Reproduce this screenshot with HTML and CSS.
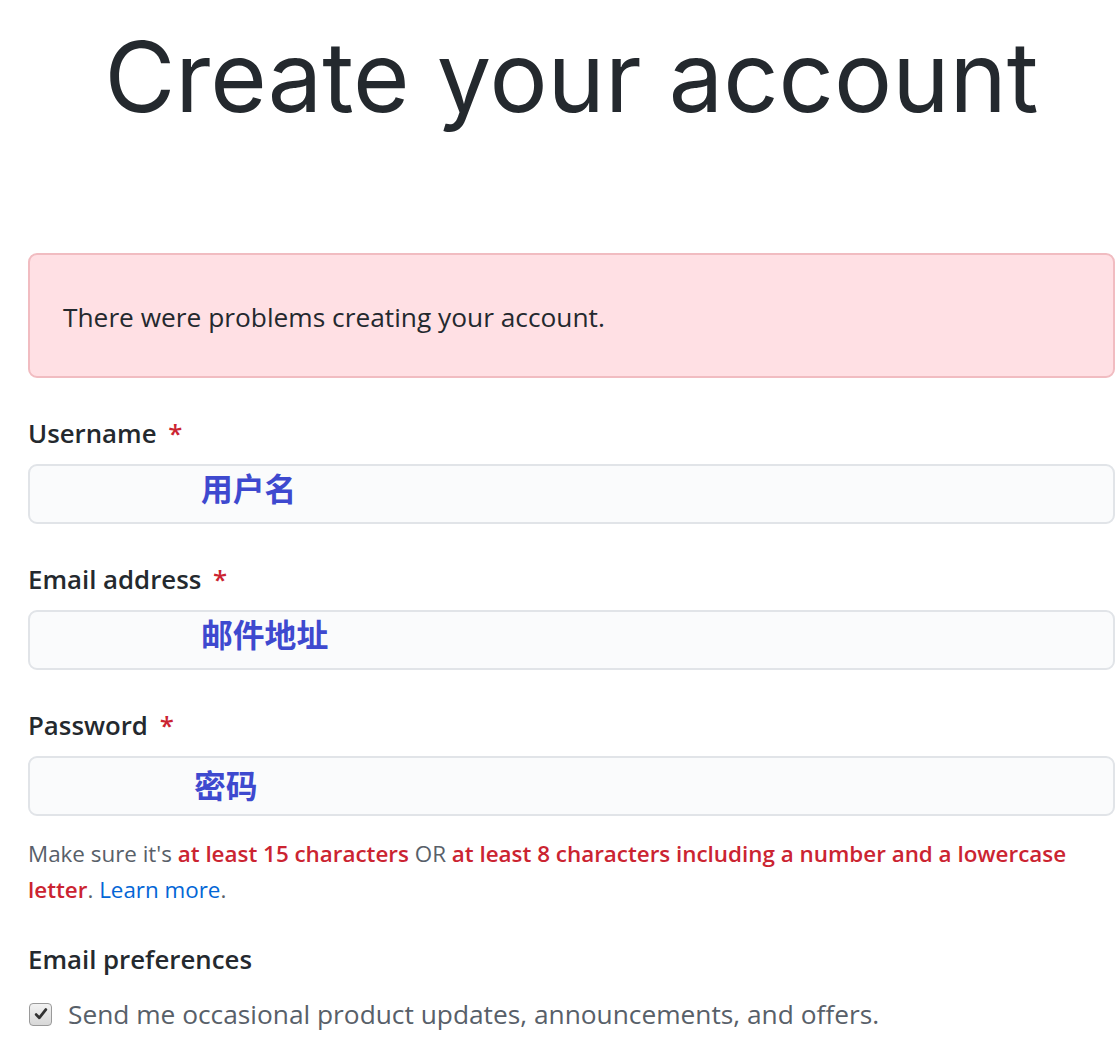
FILE: index.html
```html
<!DOCTYPE html>
<html lang="en">
<head>
<meta charset="utf-8">
<title>Create your account</title>
<link rel="stylesheet" href="styles.css">
</head>
<body>
<main class="page">
  <h1 class="title">Create your account</h1>
  <div class="flash-error">There were problems creating your account.</div>
  <form class="form">
    <div class="field">
      <label class="label">Username <span class="req">*</span></label>
      <div class="input"><span class="hint hint-user">用户名</span></div>
    </div>
    <div class="field">
      <label class="label">Email address <span class="req">*</span></label>
      <div class="input"><span class="hint hint-email">邮件地址</span></div>
    </div>
    <div class="field">
      <label class="label">Password <span class="req">*</span></label>
      <div class="input"><span class="hint hint-pass">密码</span></div>
      <p class="note">Make sure it's <strong class="err">at least 15 characters</strong> OR <strong class="err">at least 8 characters including a number and a lowercase letter</strong>. <a class="link" href="#">Learn more</a>.</p>
    </div>
    <div class="prefs">
      <h2 class="prefs-title">Email preferences</h2>
      <label class="check">
        <span class="box"><svg viewBox="0 0 16 16" width="16" height="16"><path d="M3.2 8.6 L6.3 11.8 L12.8 3.6" fill="none" stroke="#333" stroke-width="2.8" stroke-linecap="round" stroke-linejoin="round"/></svg></span>
        <span class="check-text">Send me occasional product updates, announcements, and offers.</span>
      </label>
    </div>
  </form>
</main>
</body>
</html>
```

FILE: styles.css
```css
html, body {
  margin: 0;
  padding: 0;
  background: #ffffff;
}

body {
  font-family: "Open Sans", "Noto Sans", "Liberation Sans", sans-serif;
  color: #24292e;
  overflow: hidden;
}

.page {
  width: 1087px;
  padding-left: 28px;
}

.title {
  margin: 0;
  padding-top: 19px;
  font-family: Inter, "Liberation Sans", sans-serif;
  font-weight: 400;
  font-size: 97px;
  line-height: 116px;
  text-align: center;
  color: #24292e;
  height: 234px;
}

.flash-error {
  box-sizing: border-box;
  height: 125px;
  display: flex;
  align-items: center;
  padding: 2px 33px 0;
  background: #ffe0e4;
  border: 2px solid #f1bcc1;
  border-radius: 9px;
  font-size: 26.3px;
  color: #24292e;
}

.form {
  display: flex;
  flex-direction: column;
}

.field {
  display: flex;
  flex-direction: column;
  margin-top: 40px;
}

.field + .field {
  margin-top: 40px;
}

.label {
  font-size: 25.8px;
  font-weight: 600;
  line-height: 30px;
  margin-bottom: 16px;
}

.req {
  color: #cb2431;
  margin-left: 5px;
}

.input {
  box-sizing: border-box;
  height: 60px;
  background: #fafbfc;
  border: 2px solid #e1e4e8;
  border-radius: 9px;
  display: flex;
  align-items: center;
  padding-bottom: 14px;
}

.hint {
  font-family: "Noto Sans CJK SC", sans-serif;
  font-weight: 700;
  font-size: 31.8px;
  line-height: 36px;
  color: #3e49cf;
}

.hint-user,
.hint-email {
  padding-left: 171px;
}

.hint-pass {
  padding-left: 164px;
  padding-top: 10px;
}

.note {
  margin: 20px 0 0;
  font-size: 22.4px;
  line-height: 36px;
  color: #586069;
}

.err {
  color: #cb2431;
  font-weight: 600;
}

.link {
  color: #0366d6;
  text-decoration: none;
}

.prefs {
  margin-top: 36px;
}

.prefs-title {
  margin: 0;
  font-size: 25.8px;
  font-weight: 600;
  line-height: 30px;
  color: #24292e;
}

.check {
  display: flex;
  align-items: center;
  margin-top: 22px;
}

.box {
  box-sizing: border-box;
  width: 23px;
  height: 23px;
  border: 1px solid #9a9a9a;
  border-radius: 4px;
  background: linear-gradient(#f2f2f2, #d8d8d8);
  display: flex;
  align-items: center;
  justify-content: center;
  margin-left: 1px;
}

.check-text {
  margin-left: 16px;
  font-size: 26.3px;
  color: #586069;
}
```
